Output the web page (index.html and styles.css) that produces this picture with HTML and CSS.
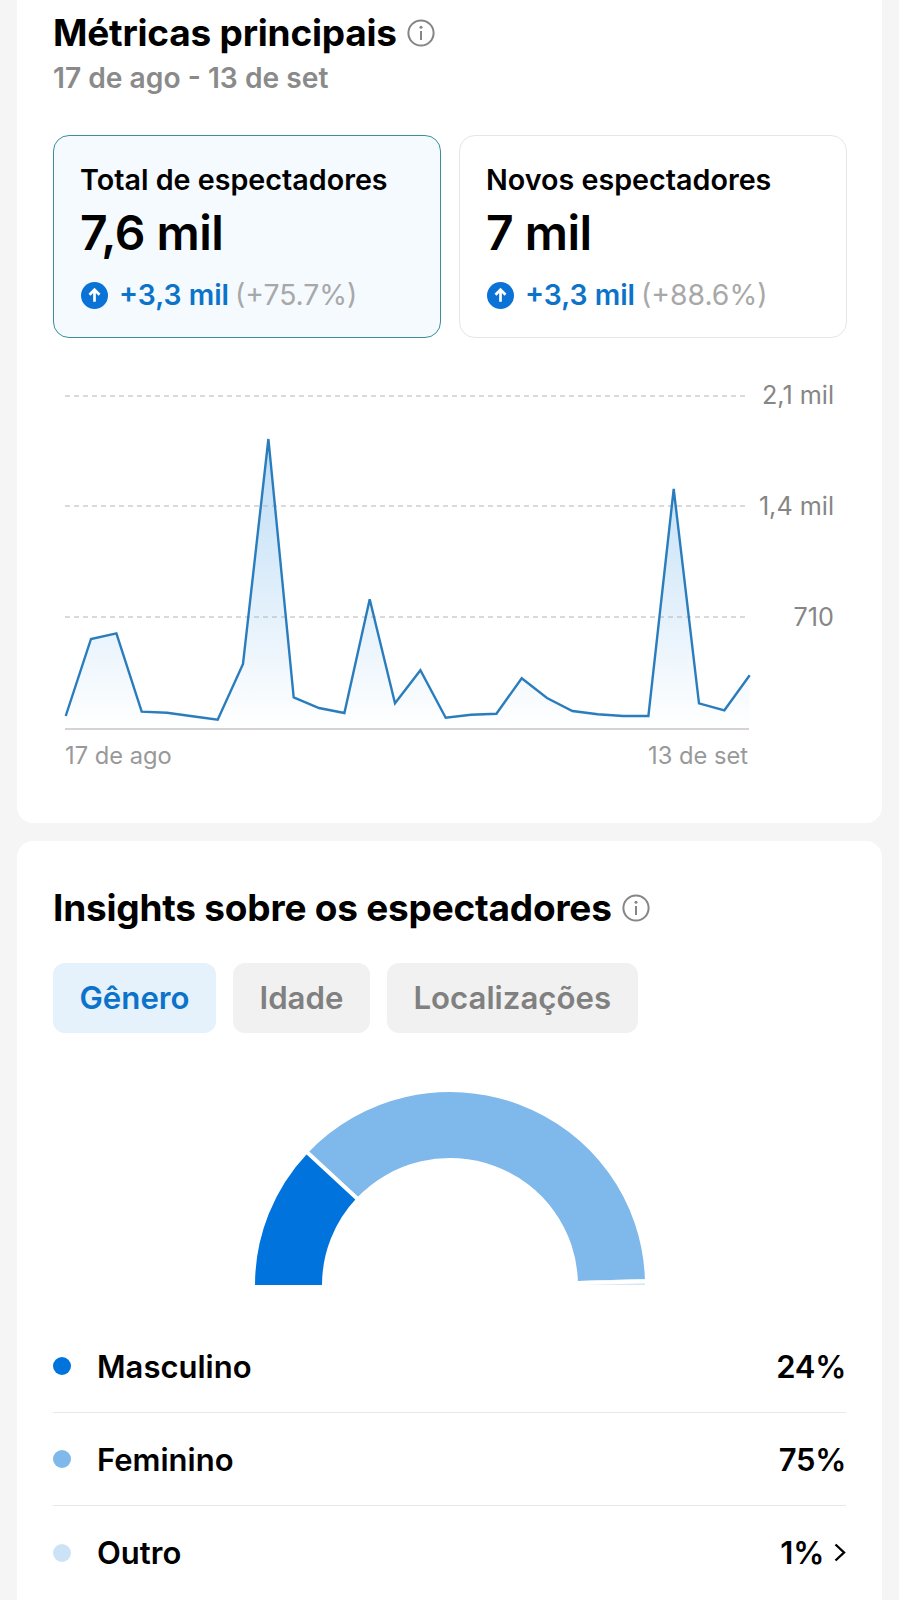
FILE: index.html
```html
<!DOCTYPE html>
<html lang="pt-BR">
<head>
<meta charset="utf-8">
<title>Métricas</title>
<link rel="stylesheet" href="styles.css">
</head>
<body>
<main class="page">
  <section class="card card-top">
    <h2 class="title">Métricas principais
      <svg class="info" viewBox="0 0 28 28"><circle cx="14" cy="14" r="12.6"/><path d="M14 12v9"/><circle class="dot-i" cx="14" cy="8.2" r="1.5"/></svg>
    </h2>
    <p class="range">17 de ago - 13 de set</p>
    <div class="tiles">
      <div class="tile tile-active">
        <div class="tile-label">Total de espectadores</div>
        <div class="tile-value">7,6 mil</div>
        <div class="tile-delta">
          <svg class="up" viewBox="0 0 28 28"><circle cx="14" cy="14" r="14"/><path d="M14 20.5V8M8.8 13.2L14 8l5.2 5.2"/></svg>
          <b>+3,3 mil</b> <span>(+75.7%)</span>
        </div>
      </div>
      <div class="tile">
        <div class="tile-label">Novos espectadores</div>
        <div class="tile-value">7 mil</div>
        <div class="tile-delta">
          <svg class="up" viewBox="0 0 28 28"><circle cx="14" cy="14" r="14"/><path d="M14 20.5V8M8.8 13.2L14 8l5.2 5.2"/></svg>
          <b>+3,3 mil</b> <span>(+88.6%)</span>
        </div>
      </div>
    </div>
    <svg class="chart" viewBox="0 380 899 400" width="899" height="400">
      <defs>
        <linearGradient id="fade" gradientUnits="userSpaceOnUse" x1="0" y1="439" x2="0" y2="729">
          <stop offset="0" stop-color="#bcdcf6"/>
          <stop offset="1" stop-color="#ffffff"/>
        </linearGradient>
      </defs>
      <path class="area" d="M65.7 716L91 639L116.4 633.3L141.7 711.7L167 712.7L192.4 716.3L217.7 719.7L243 664L268.4 439L293.7 697.3L319 708L344.4 713L369.7 599.3L395 703.3L420.4 670.3L445.7 717.7L471 714.7L496.4 713.7L521.7 678.3L547 698L572.4 711L597.7 714.3L623 716L648.4 716L673.7 489L699 703.3L724.4 710.3L749.7 675.3V729H65.7Z"/>
      <path class="grid" d="M65 396H749M65 506H749M65 617H749"/>
      <path class="axis" d="M65 729H749"/>
      <path class="line" d="M65.7 716L91 639L116.4 633.3L141.7 711.7L167 712.7L192.4 716.3L217.7 719.7L243 664L268.4 439L293.7 697.3L319 708L344.4 713L369.7 599.3L395 703.3L420.4 670.3L445.7 717.7L471 714.7L496.4 713.7L521.7 678.3L547 698L572.4 711L597.7 714.3L623 716L648.4 716L673.7 489L699 703.3L724.4 710.3L749.7 675.3"/>
      <text class="ylabel" x="834" y="404">2,1 mil</text>
      <text class="ylabel" x="834" y="515">1,4 mil</text>
      <text class="ylabel" x="834" y="626">710</text>
      <text class="xlabel" x="65" y="764">17 de ago</text>
      <text class="xlabel xlabel-end" x="748" y="764">13 de set</text>
    </svg>
  </section>

  <section class="card card-bottom">
    <h2 class="title">Insights sobre os espectadores
      <svg class="info" viewBox="0 0 28 28"><circle cx="14" cy="14" r="12.6"/><path d="M14 12v9"/><circle class="dot-i" cx="14" cy="8.2" r="1.5"/></svg>
    </h2>
    <div class="tabs">
      <div class="tab tab-active">Gênero</div>
      <div class="tab">Idade</div>
      <div class="tab">Localizações</div>
    </div>
    <svg class="gauge" viewBox="0 1085 899 205" width="899" height="205">
      <path class="seg-m" d="M255 1285A195 193 0 0 1 307.8 1152.9L356.7 1198A128 127 0 0 0 322 1285Z"/>
      <path class="seg-f" d="M307.8 1152.9A195 193 0 0 1 644.9 1278.9L577.9 1281A128 127 0 0 0 356.7 1198Z"/>
      <path class="seg-o" d="M644.9 1278.9A195 193 0 0 1 645 1285H578A128 127 0 0 0 577.9 1281Z"/>
      <path class="seg-gap" d="M302 1147.5L362 1203M650 1281.2L572 1283.2"/>
    </svg>
    <ul class="legend">
      <li class="row"><i class="dot dot-m"></i><span class="name">Masculino</span><span class="pct">24%</span></li>
      <li class="row"><i class="dot dot-f"></i><span class="name">Feminino</span><span class="pct">75%</span></li>
      <li class="row"><i class="dot dot-o"></i><span class="name">Outro</span><span class="pct">1%</span>
        <svg class="chev" viewBox="0 0 12 19"><path d="M1.5 1.5l8.5 8-8.5 8"/></svg></li>
    </ul>
  </section>
</main>
</body>
</html>
```

FILE: styles.css
```css
* { box-sizing: border-box; }
html, body { margin: 0; padding: 0; }
body {
  height: 1600px;
  overflow: hidden;
  background: #f5f5f5;
  font-family: Inter, "Liberation Sans", sans-serif;
  color: #000;
}
.page { display: flex; flex-direction: column; gap: 18px; padding: 0 17px; }
.card { background: #fff; padding: 0 36px; }
.card-top { height: 823px; border-radius: 0 0 16px 16px; padding-top: 12px; }
.card-bottom { height: 759px; border-radius: 16px 16px 0 0; padding-top: 46px; }
.title {
  margin: 0;
  display: flex;
  align-items: center;
  gap: 10px;
  font-size: 37px;
  line-height: 42px;
  font-weight: 700;
  letter-spacing: -0.22px;
}
.info { width: 28px; height: 28px; flex: none; fill: none; stroke: #858585; stroke-width: 2; }
.info .dot-i { fill: #858585; stroke: none; }
.range { margin: 6px 0 0; font-size: 28.2px; line-height: 36px; font-weight: 600; color: #8a8a8a; }
.tiles { display: grid; grid-template-columns: 388px 388px; gap: 18px; margin-top: 39px; }
.tile {
  height: 203px;
  border: 1px solid #e6e6e6;
  border-radius: 16px;
  padding: 27px 26px 0;
}
.tile-active { background: #f4fafe; border-color: #3a8e9e; }
.tile-label { font-size: 28.7px; line-height: 34px; font-weight: 600; }
.tile-value { margin-top: 8px; font-size: 48px; line-height: 56px; font-weight: 600; letter-spacing: -0.5px; }
.tile-delta { margin-top: 14px; display: flex; align-items: center; gap: 6px; font-size: 28.3px; line-height: 40px; }
.tile-delta b { color: #0b73c9; font-weight: 600; }
.tile-delta span { color: #a8a8a8; }
.up { width: 27px; height: 27px; flex: none; margin-right: 5px; margin-left: 1px; }
.up circle { fill: #0b73d6; }
.up path { fill: none; stroke: #fff; stroke-width: 2.8; }
.chart { display: block; margin: 42px 0 0 -53px; }
.area { fill: url(#fade); }
.grid { fill: none; stroke: #b4b4b4; stroke-width: 1; stroke-dasharray: 5 4; }
.axis { fill: none; stroke: #d4d4d4; stroke-width: 2; }
.line { fill: none; stroke: #2a7dbd; stroke-width: 2.4; stroke-linejoin: miter; }
.ylabel { fill: #868686; font-size: 25.2px; text-anchor: end; }
.xlabel { fill: #999; font-size: 23.7px; }
.xlabel-end { text-anchor: end; }
.tabs { display: flex; gap: 17px; margin-top: 34px; }
.tab {
  height: 70px;
  padding: 0 26.5px;
  display: flex;
  align-items: center;
  border-radius: 12px;
  background: #f1f1f1;
  color: #808080;
  font-size: 31.2px;
  font-weight: 600;
}
.tab-active { background: #e5f1fb; color: #0b73c9; }
.gauge { display: block; margin: 52px 0 0 -53px; }
.legend { list-style: none; margin: 30px 0 0; padding: 0; }
.row {
  height: 93px;
  display: flex;
  align-items: center;
  border-bottom: 1px solid #e8e8e8;
  font-size: 31px;
  font-weight: 600;
}
.row:last-child { border-bottom: 0; }
.dot { width: 18px; height: 18px; border-radius: 50%; margin-right: 26px; flex: none; }
.dot-m { background: #0074dc; }
.dot-f { background: #7fb8ea; }
.dot-o { background: #cce3f7; }
.name { flex: 1; }
.pct { letter-spacing: -0.3px; }
.chev { width: 12px; height: 19px; margin-left: 10px; fill: none; stroke: #000; stroke-width: 2.4; }
.seg-m { fill: #0074dc; }
.seg-f { fill: #7fb8ea; }
.seg-o { fill: #d3e7f5; }
.seg-gap { fill: none; stroke: #fff; stroke-width: 4; }
```
